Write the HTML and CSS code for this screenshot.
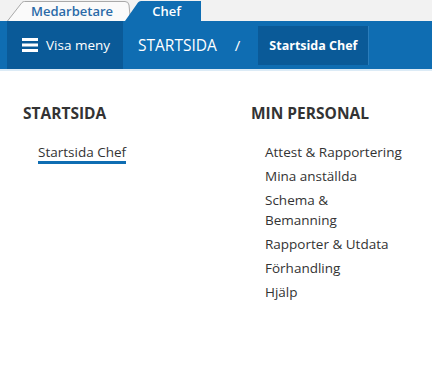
FILE: index.html
```html
<!DOCTYPE html>
<html lang="sv">
<head>
<meta charset="utf-8">
<link rel="stylesheet" href="styles.css">
</head>
<body>
<div class="tabstrip">
  <div class="tab tab-inactive">
    <svg class="tab-bg" viewBox="0 0 124 20" preserveAspectRatio="none"><path d="M0.5 20 L15 1.5 Q16 0.5 17.5 0.5 L118 0.5 Q121.5 0.5 122 4 L123.5 20" fill="#fafafa" stroke="#a9a9a9" stroke-width="1"/></svg>
    <span class="tab-label">Medarbetare</span>
  </div>
  <div class="tab tab-active">
    <svg class="tab-bg" viewBox="0 0 77 20" preserveAspectRatio="none"><path d="M0 20 L13 1.5 Q14 0 16 0 L76 0 L76 20 Z" fill="#0f6db2"/></svg>
    <span class="tab-label">Chef</span>
  </div>
</div>
<div class="navbar">
  <div class="menu-btn">
    <svg class="hamburger" viewBox="0 0 16 14" width="16" height="14"><rect x="0" y="0" width="16" height="3" fill="#fff"/><rect x="0" y="5.5" width="16" height="3" fill="#fff"/><rect x="0" y="11" width="16" height="3" fill="#fff"/></svg>
    <span>Visa meny</span>
  </div>
  <div class="crumb">STARTSIDA</div>
  <div class="sep">/</div>
  <div class="crumb-current">Startsida Chef</div>
</div>
<div class="content">
  <section class="col">
    <h2 class="col-title">STARTSIDA</h2>
    <ul class="links">
      <li><a class="link active">Startsida Chef</a></li>
    </ul>
  </section>
  <section class="col">
    <h2 class="col-title">MIN PERSONAL</h2>
    <ul class="links">
      <li><a class="link">Attest &amp; Rapportering</a></li>
      <li><a class="link">Mina anställda</a></li>
      <li><a class="link">Schema &amp;<br>Bemanning</a></li>
      <li><a class="link">Rapporter &amp; Utdata</a></li>
      <li><a class="link">Förhandling</a></li>
      <li><a class="link">Hjälp</a></li>
    </ul>
  </section>
</div>
</body>
</html>
```
FILE: styles.css
```css
* { box-sizing: border-box; }
html, body {
  margin: 0;
  padding: 0;
  background: #ffffff;
  font-family: "Open Sans", "Noto Sans", sans-serif;
  color: #333333;
}
.tabstrip {
  display: flex;
  height: 21px;
  padding: 1px 0 0 7px;
  background: #f2f2f2;
}
.tab {
  position: relative;
  height: 20px;
  display: flex;
  align-items: center;
  justify-content: center;
  font-size: 13px;
  font-weight: 600;
}
.tab-bg {
  position: absolute;
  left: 0;
  top: 0;
  width: 100%;
  height: 100%;
}
.tab-label { position: relative; }
.tab-inactive {
  width: 124px;
  color: #2b6aa8;
  padding-left: 6px;
}
.tab-active {
  width: 77px;
  margin-left: -6px;
  color: #ffffff;
  padding-left: 6px;
}
.navbar {
  display: flex;
  align-items: center;
  height: 50px;
  padding-left: 7px;
  background: #0f6db2;
  border-bottom: 2px solid #dcebf6;
  color: #ffffff;
}
.menu-btn {
  display: flex;
  align-items: center;
  gap: 8px;
  width: 116px;
  height: 100%;
  padding-left: 15px;
  background: #0a5a98;
  font-size: 13.5px;
}
.crumb {
  margin-left: 15px;
  font-size: 15.5px;
}
.sep {
  margin-left: 18px;
  font-size: 15px;
}
.crumb-current {
  margin-left: 18px;
  height: 39px;
  display: flex;
  align-items: center;
  padding: 0 11px;
  background: #0a5a98;
  border-right: 1px solid #2a7dbc;
  font-size: 12.5px;
  font-weight: 700;
  white-space: nowrap;
}
.content {
  display: grid;
  grid-template-columns: 228px 1fr;
  padding: 32px 0 0 23px;
}
.col-title {
  margin: 0 0 17px 0;
  font-size: 15.5px;
  font-weight: 700;
  line-height: 20px;
  color: #333333;
}
.links {
  list-style: none;
  margin: 0;
  padding: 0 0 0 14px;
}
.links li {
  padding: 2px 0;
  font-size: 13.5px;
  line-height: 20px;
}
.link {
  color: #333333;
  text-decoration: none;
}
.link.active {
  display: inline-block;
  line-height: 18px;
  border-bottom: 3px solid #0f6db2;
}
.col:first-child .links { padding-left: 15px; }
```
